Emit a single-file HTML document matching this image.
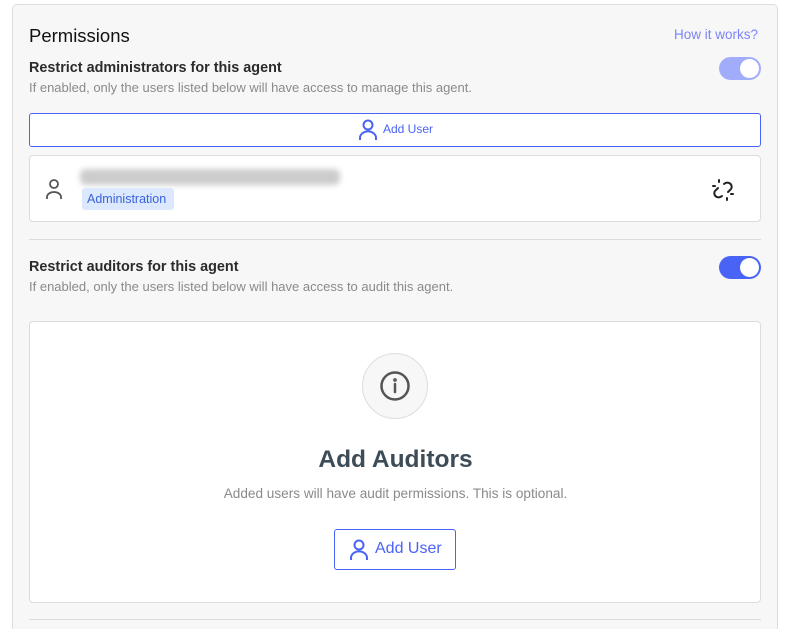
<!DOCTYPE html>
<html><head><meta charset="utf-8"><style>
*{box-sizing:border-box;margin:0;padding:0}
html,body{width:791px;height:629px;overflow:hidden}
body{background:#fff;font-family:"Liberation Sans",sans-serif;position:relative}
.a{position:absolute}
.panel{left:12px;top:4px;width:766px;height:640px;background:#f7f7f7;border:1px solid #dcdcdc;border-radius:5px}
.h{font-size:14.4px;font-weight:bold;color:#2b2b2b}
.d{font-size:13px;color:#8a8a8a}
.tog{width:42px;height:23px;border-radius:12px}
.knob{position:absolute;right:2px;top:2px;width:19px;height:19px;border-radius:50%;background:#fff}
</style></head><body>
<div class="a panel"></div>
<div class="a" style="left:29px;top:25px;font-size:18.5px;color:#111">Permissions</div>
<div class="a" style="left:674px;top:27px;font-size:13.5px;color:#7b84f5">How it works?</div>
<div class="a h" style="left:29px;top:60px">Restrict administrators for this agent</div>
<div class="a d" style="left:29px;top:80px">If enabled, only the users listed below will have access to manage this agent.</div>
<div class="a tog" style="left:719px;top:57px;background:#a1adfb"><div class="knob"></div></div>
<div class="a" style="left:29px;top:113px;width:732px;height:34px;border:1px solid #4a63f7;border-radius:3px;background:#fff"></div>
<svg class="a" style="left:358px;top:119px" width="20" height="22" viewBox="0 0 20 22" fill="none" stroke="#4a63f7" stroke-width="2"><circle cx="10" cy="6" r="4.5"/><path d="M2 21v-2a6 5 0 0 1 16 0v2"/></svg>
<div class="a" style="left:383px;top:122px;font-size:12px;color:#4a63f7">Add User</div>
<div class="a" style="left:29px;top:155px;width:732px;height:67px;border:1px solid #dcdcdc;border-radius:4px;background:#fff"></div>
<svg class="a" style="left:45px;top:178px" width="18" height="22" viewBox="0 0 18 22" fill="none" stroke="#555" stroke-width="1.8"><circle cx="9" cy="6" r="4"/><path d="M2 21v-2a7 5 0 0 1 14 0v2"/></svg>
<div class="a" style="left:80px;top:169px;width:260px;height:16px;background:#ccc;border-radius:6px;filter:blur(3px)"></div>
<div class="a" style="left:82px;top:188px;width:92px;height:22px;background:#dbe8fd;border-radius:3px;font-size:12.5px;color:#3a63d8;padding:4px 0 0 5px">Administration</div>
<svg class="a" style="left:711px;top:178px" width="24" height="24" viewBox="0 0 24 24" fill="none" stroke="#222" stroke-width="2" stroke-linecap="round"><path d="M13 6a5 5 0 0 1 5-1 4 4 0 0 1 1 7l-2 2M11 18a5 5 0 0 1-5 1 4 4 0 0 1-1-7l2-2"/><path d="M8 2v2M2 8h2M16 22v-2M22 16h-2"/></svg>
<div class="a" style="left:29px;top:239px;width:732px;height:1px;background:#dcdcdc"></div>
<div class="a h" style="left:29px;top:259px">Restrict auditors for this agent</div>
<div class="a d" style="left:29px;top:279px">If enabled, only the users listed below will have access to audit this agent.</div>
<div class="a tog" style="left:719px;top:256px;background:#4a63f7"><div class="knob"></div></div>
<div class="a" style="left:29px;top:321px;width:732px;height:282px;border:1px solid #dcdcdc;border-radius:4px;background:#fff"></div>
<div class="a" style="left:362px;top:353px;width:66px;height:66px;border-radius:50%;background:#f7f7f7;border:1px solid #ddd"></div>
<svg class="a" style="left:380px;top:371px" width="30" height="30" viewBox="0 0 30 30" fill="none" stroke="#555" stroke-width="2.5"><circle cx="15" cy="15" r="13.5"/><path d="M15 13v8" stroke-linecap="round"/><circle cx="15" cy="9" r="0.6" fill="#555"/></svg>
<div class="a" style="left:0;width:791px;top:446px;text-align:center;font-size:24.5px;font-weight:bold;color:#3d4c56">Add Auditors</div>
<div class="a" style="left:0;width:791px;top:486px;text-align:center;font-size:13.6px;color:#8a8a8a">Added users will have audit permissions. This is optional.</div>
<div class="a" style="left:334px;top:529px;width:122px;height:41px;border:1px solid #4a63f7;border-radius:3px;background:#fff"></div>
<svg class="a" style="left:349px;top:539px" width="20" height="22" viewBox="0 0 20 22" fill="none" stroke="#4a63f7" stroke-width="2"><circle cx="10" cy="6" r="4.5"/><path d="M2 21v-2a6 5 0 0 1 16 0v2"/></svg>
<div class="a" style="left:375px;top:540px;font-size:16px;color:#4a63f7">Add User</div>
<div class="a" style="left:29px;top:619px;width:732px;height:1px;background:#dcdcdc"></div>
</body></html>
